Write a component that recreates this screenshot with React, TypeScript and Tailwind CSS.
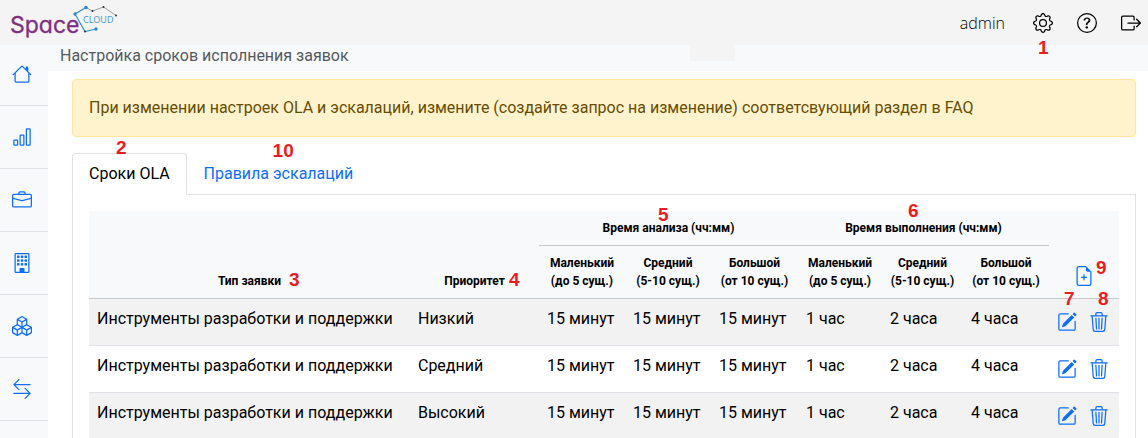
import React, { ReactNode, useState } from 'react';
import clsx from 'clsx';
import {
	BsArrowLeftRight,
	BsBarChart,
	BsBoxArrowRight,
	BsBoxes,
	BsBriefcase,
	BsBuilding,
	BsFileEarmarkPlus,
	BsGear,
	BsHouse,
	BsPencilSquare,
	BsQuestionCircle,
	BsTrash3,
} from 'react-icons/bs';

interface NavItem {
	title: string;
	icon: React.ComponentType<{ className?: string }>;
}

const navItems: NavItem[] = [
	{ title: 'Главная', icon: BsHouse },
	{ title: 'Отчёты', icon: BsBarChart },
	{ title: 'Портфель', icon: BsBriefcase },
	{ title: 'Организации', icon: BsBuilding },
	{ title: 'Ресурсы', icon: BsBoxes },
	{ title: 'Обмен', icon: BsArrowLeftRight },
];

const sizes = [
	['Маленький', '(до 5 сущ.)'],
	['Средний', '(5-10 сущ.)'],
	['Большой', '(от 10 сущ.)'],
];

const analysis = ['15 минут', '15 минут', '15 минут'];
const execution = ['1 час', '2 часа', '4 часа'];

const rows = [
	{ type: 'Инструменты разработки и поддержки', priority: 'Низкий', times: [...analysis, ...execution] },
	{ type: 'Инструменты разработки и поддержки', priority: 'Средний', times: [...analysis, ...execution] },
	{ type: 'Инструменты разработки и поддержки', priority: 'Высокий', times: [...analysis, ...execution] },
];

const tabs = [
	{ label: 'Сроки OLA', mark: '2', markClass: 'left-[43px] -top-4' },
	{ label: 'Правила эскалаций', mark: '10', markClass: 'left-[85px] -top-[13px]' },
];

// Red callout number that lies over the control it points at
function Mark({ className, children }: { className: string; children: ReactNode }) {
	return (
		<span
			className={clsx(
				"pointer-events-none absolute z-10 font-['Liberation_Sans',sans-serif] text-[19px] leading-5 font-bold text-[#ed1c24]",
				className
			)}
		>
			{children}
		</span>
	);
}

function Logo() {
	return (
		<svg width="120" height="42" viewBox="0 0 120 42" role="img" aria-label="Space Cloud">
			<text
				x="10"
				y="31"
				className="font-['Inter',sans-serif] text-[23px] [font-feature-settings:'cv11']"
				fill="#7f2f83"
				stroke="#7f2f83"
				strokeWidth="0.3"
			>
				Space
			</text>
			<text x="83" y="21" className="font-['Open_Sans',sans-serif] text-[9px]" fill="#4596cf">
				CLOUD
			</text>
			<g fill="none">
				<path d="M86 5.5 75 12l10 17.5L96 27" stroke="#3b8fcb" strokeWidth="1.2" />
				<path d="M86 5.5 92.5 9l11-4L116 13.5" stroke="#777" strokeWidth="0.7" />
			</g>
			<g fill="#2f88c8">
				<circle cx="86" cy="5.5" r="1.7" />
				<circle cx="75" cy="12" r="1.7" />
				<circle cx="96" cy="27" r="1.7" />
			</g>
			<g fill="#333">
				<circle cx="92.5" cy="9" r="1" />
				<circle cx="103.5" cy="5" r="1" />
				<circle cx="116" cy="13.5" r="1" />
				<circle cx="85" cy="29.5" r="1" />
			</g>
		</svg>
	);
}

function Header() {
	return (
		<header className="flex h-[45px] shrink-0 items-center justify-between bg-[#f4f4f4] pr-[7px]">
			<a href="#home" className="block">
				<Logo />
			</a>
			<div className="flex items-center text-black">
				<span className="mr-7 font-['Open_Sans',sans-serif] text-base font-light">admin</span>
				<button type="button" aria-label="Настройки" className="relative mr-6">
					<BsGear className="size-5" />
					<Mark className="top-[25px] left-[5px]">1</Mark>
				</button>
				<button type="button" aria-label="Помощь" className="mr-6">
					<BsQuestionCircle className="size-5" />
				</button>
				<button type="button" aria-label="Выход">
					<BsBoxArrowRight className="size-5" />
				</button>
			</div>
		</header>
	);
}

function Sidebar() {
	return (
		<nav className="w-12 shrink-0 bg-[#f8f9fa]">
			{navItems.map((item) => (
				<a
					key={item.title}
					href="#nav"
					aria-label={item.title}
					className="flex justify-center border-b border-[#dee2e6] py-[21px] pr-1 text-[#0d6efd] first:pt-[19px]"
				>
					<item.icon className="size-5" />
				</a>
			))}
		</nav>
	);
}

function OlaTable() {
	return (
		<table className="w-full table-fixed border-collapse text-left text-black">
			<colgroup>
				<col />
				<col className="w-[129px]" />
				<col className="w-[86px]" />
				<col className="w-[86px]" />
				<col className="w-[87px]" />
				<col className="w-[84px]" />
				<col className="w-[81px]" />
				<col className="w-[86px]" />
				<col className="w-[70px]" />
			</colgroup>
			<thead className="bg-[#f8f9fa] text-center text-xs leading-[18px]">
				<tr>
					<th rowSpan={2} className="relative border-b border-[#c6c7c8] p-2 align-bottom">
						Тип заявки
						<Mark className="bottom-2 left-[200px]">3</Mark>
					</th>
					<th rowSpan={2} className="relative border-b border-[#c6c7c8] p-2 align-bottom">
						Приоритет
						<Mark className="bottom-2 left-[99px]">4</Mark>
					</th>
					<th colSpan={3} className="relative border-b border-[#c6c7c8] p-2">
						Время анализа (чч:мм)
						<Mark className="-top-1.5 left-[119px]">5</Mark>
					</th>
					<th colSpan={3} className="relative border-b border-[#c6c7c8] p-2">
						Время выполнения (чч:мм)
						<Mark className="-top-2.5 left-[110px]">6</Mark>
					</th>
					<th rowSpan={2} className="relative border-b border-[#c6c7c8] px-2 pb-3 align-bottom">
						<button type="button" aria-label="Добавить" className="align-bottom text-[#0d6efd]">
							<BsFileEarmarkPlus className="size-5" />
						</button>
						<Mark className="bottom-5 left-[47px]">9</Mark>
					</th>
				</tr>
				<tr>
					{[...sizes, ...sizes].map(([name, range], index) => (
						<th key={index} className="border-b border-[#c6c7c8] py-2 whitespace-nowrap">
							{name}
							<br />
							{range}
						</th>
					))}
				</tr>
			</thead>
			<tbody className="text-base leading-6">
				{rows.map((row, index) => (
					<tr key={row.priority} className="h-[47px] border-b border-[#dee2e6] align-top odd:bg-[#f2f2f2]">
						<td className="p-2 whitespace-nowrap">{row.type}</td>
						<td className="p-2">{row.priority}</td>
						{row.times.map((time, i) => (
							<td key={i} className="py-2 pl-2 whitespace-nowrap">
								{time}
							</td>
						))}
						<td className="relative px-2 pt-[13px]">
							<div className="flex gap-3 text-[#0d6efd]">
								<button type="button" aria-label="Изменить">
									<BsPencilSquare className="size-5" />
								</button>
								<button type="button" aria-label="Удалить">
									<BsTrash3 className="size-5" />
								</button>
							</div>
							{index === 0 && (
								<>
									<Mark className="-top-2.5 left-[15px]">7</Mark>
									<Mark className="-top-2.5 left-[49px]">8</Mark>
								</>
							)}
						</td>
					</tr>
				))}
			</tbody>
		</table>
	);
}

export default function App() {
	const [active, setActive] = useState(0);

	return (
		<div className="flex h-screen flex-col overflow-hidden bg-white font-['Roboto',sans-serif]">
			<Header />
			<div className="flex min-h-0 flex-1">
				<Sidebar />
				<main className="min-w-0 flex-1">
					<div className="relative bg-[#f8f9fa] px-3 pb-1">
						<h1 className="text-base leading-[22px] text-[#55595d]">Настройка сроков исполнения заявок</h1>
						<div className="absolute top-0 left-[642px] h-4 w-[45px] bg-[#f4f4f4]" />
					</div>
					<div className="pt-2 pr-3 pl-6">
						<div role="alert" className="rounded border border-[#ffe69c] bg-[#fff3cd] p-4 text-base leading-6 text-[#664d03]">
							При изменении настроек OLA и эскалаций, измените (создайте запрос на изменение) соответсвующий раздел в FAQ
						</div>
						<div role="tablist" className="mt-4 flex border-b border-[#dee2e6] text-base leading-6">
							{tabs.map((tab, index) => (
								<button
									key={tab.label}
									type="button"
									role="tab"
									aria-selected={active === index}
									onClick={() => setActive(index)}
									className={clsx(
										'relative -mb-px rounded-t border px-4 py-2',
										active === index ? 'border-[#dee2e6] border-b-white bg-white text-black' : 'border-transparent text-[#0d6efd]'
									)}
								>
									{tab.label}
									<Mark className={tab.markClass}>{tab.mark}</Mark>
								</button>
							))}
						</div>
						<div role="tabpanel" className="border-x border-[#dee2e6] p-4">
							<OlaTable />
						</div>
					</div>
				</main>
			</div>
		</div>
	);
}
